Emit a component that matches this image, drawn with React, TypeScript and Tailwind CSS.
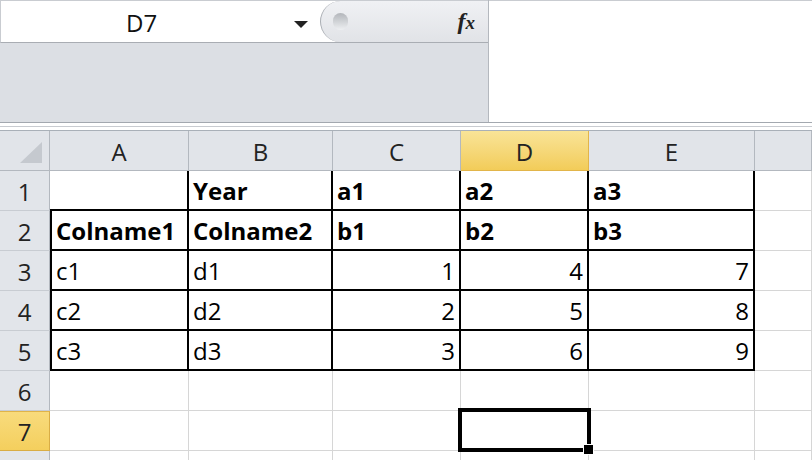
import React from "react";

const cols = ["A", "B", "C", "D", "E", ""];

type Cell = { v: string; bold?: boolean; right?: boolean };

const data: Cell[][] = [
  [{ v: "" }, { v: "Year", bold: true }, { v: "a1", bold: true }, { v: "a2", bold: true }, { v: "a3", bold: true }, { v: "" }],
  [{ v: "Colname1", bold: true }, { v: "Colname2", bold: true }, { v: "b1", bold: true }, { v: "b2", bold: true }, { v: "b3", bold: true }, { v: "" }],
  [{ v: "c1" }, { v: "d1" }, { v: "1", right: true }, { v: "4", right: true }, { v: "7", right: true }, { v: "" }],
  [{ v: "c2" }, { v: "d2" }, { v: "2", right: true }, { v: "5", right: true }, { v: "8", right: true }, { v: "" }],
  [{ v: "c3" }, { v: "d3" }, { v: "3", right: true }, { v: "6", right: true }, { v: "9", right: true }, { v: "" }],
  [{ v: "" }, { v: "" }, { v: "" }, { v: "" }, { v: "" }, { v: "" }],
  [{ v: "" }, { v: "" }, { v: "" }, { v: "" }, { v: "" }, { v: "" }],
  [{ v: "" }, { v: "" }, { v: "" }, { v: "" }, { v: "" }, { v: "" }],
];

function cellClass(r: number, c: number): string {
  const inTable = c <= 4 && r <= 4 && !(r === 0 && c === 0);
  const parts: string[] = ["relative", "flex", "items-end", "bg-white"];
  if (inTable) {
    parts.push("border-r-2", "border-b-2", "border-black");
    if (c === 0) parts.push("border-l-2");
  } else if (r === 0 && c === 0) {
    parts.push("border-r-2", "border-b-2", "border-black");
  } else {
    parts.push("border-r", "border-b", "border-[#d6d6d6]");
  }
  if (r === 6 && c === 3) parts.push("z-10");
  return parts.join(" ");
}

export default function App() {
  return (
    <div className="w-[812px] h-[460px] overflow-hidden bg-white font-['Open_Sans',sans-serif] text-[24px] leading-none text-black">
      {/* Formula bar area */}
      <div className="h-[123px] flex border-b border-[#a3a8af]">
        <div className="w-[489px] flex flex-col border-r border-[#b4b8be]">
          <div className="h-[43px] flex border-b border-[#a9adb3] border-t border-t-[#c9ccd1] border-l border-l-[#c9ccd1]">
            <div className="w-[319px] bg-white relative flex">
              <div className="absolute left-[125px] top-[10px] text-[#111]">D7</div>
              <svg className="absolute left-[292px] top-[19px]" width="16" height="9" viewBox="0 0 16 9">
                <polygon points="1,1 15,1 8,8" fill="#222" />
              </svg>
            </div>
            <div className="flex-1 relative rounded-l-[22px] border-l border-[#a9adb3] bg-linear-to-b from-[#f0f1f4] to-[#e1e3e7]">
              <div className="absolute left-[12px] top-[12px] w-[15px] h-[17px] rounded-full bg-linear-to-b from-[#b3b6bb] to-[#eef0f2]" />
              <div className="absolute right-[13px] top-[8px] font-['Liberation_Serif',serif] italic font-bold text-[24px] text-[#222]">
                f<span className="text-[19px]">x</span>
              </div>
            </div>
          </div>
          <div className="flex-1 bg-[#dcdfe4]" />
        </div>
        <div className="flex-1 bg-white border-t border-[#c9ccd1]" />
      </div>
      <div className="h-[7px] bg-white pt-[3px]">
        <div className="h-px bg-[#c8cbd0]" />
      </div>

      {/* Sheet grid */}
      <div className="grid grid-cols-[50px_139px_144px_128px_128px_166px_1fr] auto-rows-[40px] border-t border-[#a9b0b8]">
        <div className="relative bg-[#e1e4e9] border-r border-b border-[#b3b8bf]">
          <svg className="absolute left-0 top-0" width="50" height="40" viewBox="0 0 50 40">
            <polygon points="42,11 42,32 20,32" fill="#c5c9cf" />
          </svg>
        </div>
        {cols.map((c, i) =>
          c === "D" ? (
            <div
              key={i}
              className="flex items-end justify-center pb-[6px] bg-linear-to-b from-[#f9e497] to-[#f2cc58] border-r border-b border-[#e2b54a] text-[#222]"
            >
              {c}
            </div>
          ) : (
            <div
              key={i}
              className="flex items-end justify-center pb-[6px] bg-[#e1e4e9] border-r border-b border-[#b3b8bf] text-[#222]"
            >
              {c}
            </div>
          )
        )}

        {data.map((row, r) => (
          <React.Fragment key={r}>
            {r === 6 ? (
              <div className="flex items-end justify-center pb-[6px] bg-linear-to-b from-[#f8db7c] to-[#f4cf5d] border-t border-t-[#e0b449] border-r border-b border-[#d9ad45] text-[#222]">
                {r + 1}
              </div>
            ) : (
              <div className="flex items-end justify-center pb-[6px] bg-[#e2e5ea] border-r border-r-[#b3b8bf] border-b border-b-[#c8ccd2] text-[#222]">
                {r < 7 ? r + 1 : ""}
              </div>
            )}
            {row.map((cell, c) => (
              <div key={c} className={cellClass(r, c)}>
                <div
                  className={
                    "w-full whitespace-nowrap pb-[6px] " +
                    (cell.right ? "text-right pr-[4px]" : "text-left pl-[4px]") +
                    (cell.bold ? " font-bold" : "")
                  }
                >
                  {cell.v}
                </div>
                {r === 6 && c === 3 && (
                  <>
                    <div className="absolute -left-[3px] -right-[3px] -top-[3px] -bottom-[2px] border-[4px] border-black" />
                    <div className="absolute -right-[6px] -bottom-[5px] w-[11px] h-[11px] bg-black border border-white" />
                  </>
                )}
              </div>
            ))}
          </React.Fragment>
        ))}
      </div>
    </div>
  );
}
